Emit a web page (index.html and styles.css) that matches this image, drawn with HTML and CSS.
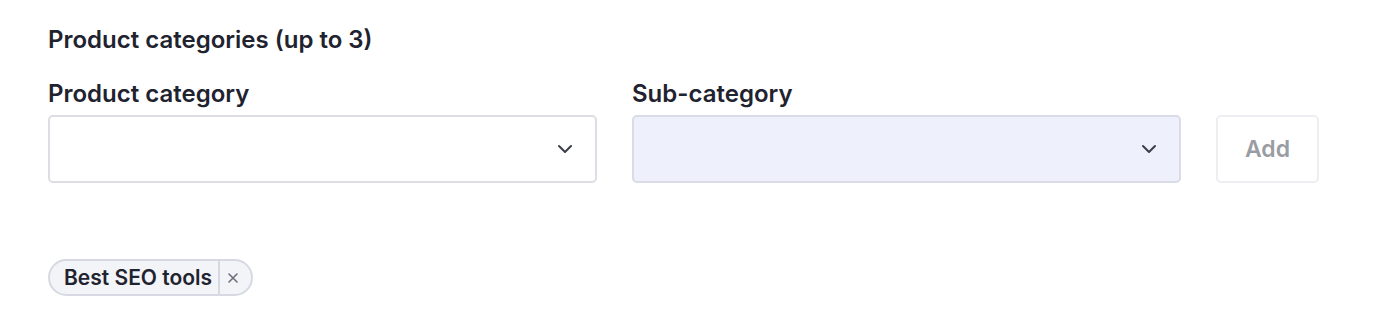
FILE: index.html
```html
<!DOCTYPE html>
<html>
<head>
<meta charset="utf-8">
<link rel="stylesheet" href="styles.css">
</head>
<body>
<div class="page">
  <h2 class="title">Product categories (up to 3)</h2>
  <div class="row">
    <div class="field">
      <label class="label">Product category</label>
      <div class="select">
        <svg class="chev" width="16" height="10" viewBox="0 0 16 10"><path d="M2 2l6 6 6-6" fill="none" stroke="#3b3f4a" stroke-width="2" stroke-linecap="round" stroke-linejoin="round"/></svg>
      </div>
    </div>
    <div class="field">
      <label class="label">Sub-category</label>
      <div class="select disabled">
        <svg class="chev" width="16" height="10" viewBox="0 0 16 10"><path d="M2 2l6 6 6-6" fill="none" stroke="#3b3f4a" stroke-width="2" stroke-linecap="round" stroke-linejoin="round"/></svg>
      </div>
    </div>
    <button class="add">Add</button>
  </div>
  <div class="chips">
    <span class="chip"><span class="chip-text">Best SEO tools</span><span class="chip-x">
      <svg width="12" height="12" viewBox="0 0 12 12"><path d="M2 2l8 8M10 2l-8 8" stroke="#6b6f7b" stroke-width="1.6" stroke-linecap="round"/></svg>
    </span></span>
  </div>
</div>
</body>
</html>
```
FILE: styles.css
```css
html, body { margin: 0; padding: 0; background: #fff; }
body { font-family: Inter, "Noto Sans", sans-serif; color: #1f2330; }
* { box-sizing: border-box; }
.page { padding: 24px 48px 0 48px; }
.title { margin: 0; font-size: 24px; font-weight: 600; line-height: 32px; }
.row { display: flex; align-items: flex-end; gap: 35px; margin-top: 22px; }
.field { display: flex; flex-direction: column; width: 549px; }
.label { font-size: 24px; font-weight: 600; line-height: 32px; margin-bottom: 5px; }
.select { height: 68px; border: 2px solid #dcdee3; border-radius: 5px; background: #fff; display: flex; align-items: center; justify-content: flex-end; padding-right: 22px; }
.select.disabled { background: #eef0fb; border-color: #d9dce6; }
.chev { display: block; }
.add { width: 103px; height: 68px; border: 2px solid #eceef1; border-radius: 5px; background: #fff; font-family: Inter, sans-serif; font-size: 23px; font-weight: 600; color: #9a9ca3; padding: 0; }
.chips { margin-top: 76px; display: flex; }
.chip { display: inline-flex; align-items: stretch; height: 37px; border: 2px solid #d6d9e2; background: #f3f4f8; border-radius: 19px; }
.chip-text { font-size: 21px; font-weight: 600; line-height: 33px; padding: 0 6px 0 14px; }
.chip-x { border-left: 2px solid #d6d9e2; display: flex; align-items: center; padding: 0 12px 0 7px; }
```
